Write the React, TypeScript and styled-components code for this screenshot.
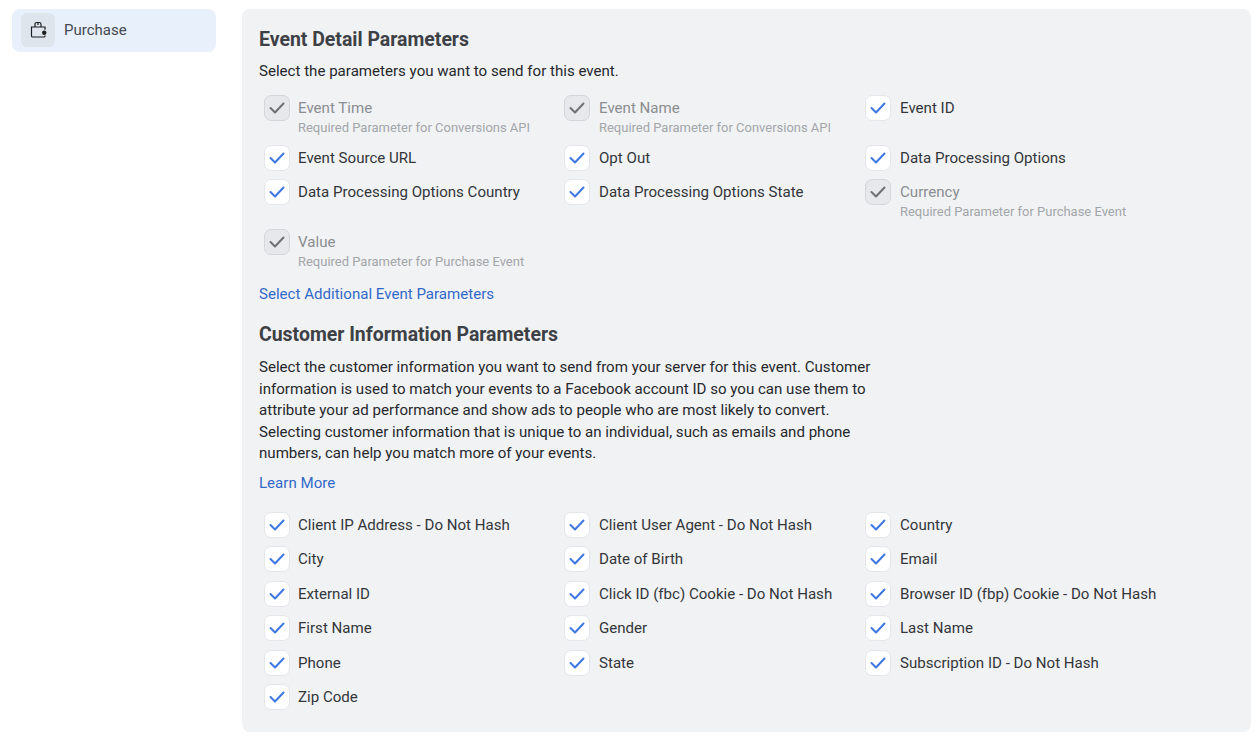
import React from "react";
import styled, { createGlobalStyle } from "styled-components";

const Global = createGlobalStyle`
  html, body { margin: 0; padding: 0; background: #fff; }
  body { font-family: Roboto, "Liberation Sans", sans-serif; color: #1c1e21; }
`;

const Page = styled.div`
  display: flex;
  align-items: flex-start;
  width: 1260px;
  height: 742px;
  box-sizing: border-box;
  padding: 9px 9px 10px 12px;
  gap: 26px;
  overflow: hidden;
`;

const SideItem = styled.div`
  display: flex;
  align-items: center;
  gap: 9px;
  width: 204px;
  height: 43px;
  box-sizing: border-box;
  padding: 0 0 1px 9px;
  background: #e8f0fb;
  border-radius: 8px;
  font-size: 15px;
  color: #444950;
`;

const IconBox = styled.div`
  display: flex;
  align-items: center;
  justify-content: center;
  width: 34px;
  height: 34px;
  background: #dfe5ec;
  border-radius: 6px;
  color: #1c1e21;
`;

const Panel = styled.div`
  width: 1009px;
  height: 723px;
  box-sizing: border-box;
  padding: 19px 17px 0;
  background: #f1f2f4;
  border-radius: 8px;
`;

const Heading = styled.h2<{ $top?: number }>`
  margin: ${(p) => p.$top ?? 0}px 0 0;
  font-size: 19.45px;
  line-height: 23px;
  font-weight: 700;
  color: #3d4146;
`;

const Copy = styled.p<{ $top: number }>`
  margin: ${(p) => p.$top}px 0 0;
  width: 625px;
  font-size: 15.08px;
  line-height: 21.6px;
  color: #26282c;
`;

const Options = styled.div<{ $top: number }>`
  display: grid;
  grid-template-columns: repeat(3, 301px);
  margin: ${(p) => p.$top}px 0 0 5px;
`;

const Option = styled.div<{ $h: number }>`
  display: flex;
  align-items: flex-start;
  height: ${(p) => p.$h}px;
  gap: 8px;

  &:not(:nth-child(3n + 1)) > :first-child {
    margin: 0 0.6px 0 -0.6px;
  }
`;

const Box = styled.div<{ $locked?: boolean }>`
  flex: none;
  display: flex;
  align-items: center;
  justify-content: center;
  width: 26px;
  height: 26px;
  box-sizing: border-box;
  border-radius: 7px;
  border: 1px solid ${(p) => (p.$locked ? "#d4d6da" : "#e4e6ea")};
  background: ${(p) => (p.$locked ? "#e7e8eb" : "#ffffff")};
  color: ${(p) => (p.$locked ? "#6e7074" : "#3f77e2")};
`;

const LabelCol = styled.div`
  display: flex;
  flex-direction: column;
`;

const Label = styled.span<{ $locked?: boolean }>`
  font-size: 15.08px;
  line-height: 26px;
  white-space: nowrap;
  color: ${(p) => (p.$locked ? "#8a8d91" : "#33363a")};
`;

const Sub = styled.span`
  font-size: 12.98px;
  line-height: 13px;
  white-space: nowrap;
  color: #a3a6aa;
`;

const Link = styled.a<{ $top: number }>`
  display: block;
  margin-top: ${(p) => p.$top}px;
  font-size: 15.08px;
  line-height: 20px;
  color: #3269c9;
`;

const Check = () => (
  <svg width="16" height="12" viewBox="0 0 16 12" fill="none">
    <path d="M1.5 6 L6 10.5 L14.5 1.5" stroke="currentColor" strokeWidth="2" strokeLinecap="round" strokeLinejoin="round" />
  </svg>
);

const Bag = () => (
  <svg width="18" height="18" viewBox="0 0 18 18" fill="none" stroke="currentColor" strokeWidth="1.2">
    <path d="M16 8.8 V6 H2.5 V15 A1 1 0 0 0 3.5 16 H15 A1 1 0 0 0 16 15 V14.6" />
    <path d="M6 6 V3.2 Q6 1.5 7.7 1.5 H10.3 Q12 1.5 12 3.2 V6" />
    <path d="M9 1.5 V4" />
    <circle cx="15.2" cy="11.7" r="2.2" fill="currentColor" stroke="none" />
  </svg>
);

type O = { l: string; s?: string };
const Item = ({ l, s, h }: O & { h: number }) => (
  <Option $h={h}>
    <Box $locked={!!s}><Check /></Box>
    <LabelCol>
      <Label $locked={!!s}>{l}</Label>
      {s && <Sub>{s}</Sub>}
    </LabelCol>
  </Option>
);

const CAPI = "Required Parameter for Conversions API";
const PE = "Required Parameter for Purchase Event";

const eventRows: { h: number; items: O[] }[] = [
  { h: 50, items: [{ l: "Event Time", s: CAPI }, { l: "Event Name", s: CAPI }, { l: "Event ID" }] },
  { h: 34.6, items: [{ l: "Event Source URL" }, { l: "Opt Out" }, { l: "Data Processing Options" }] },
  { h: 49.4, items: [{ l: "Data Processing Options Country" }, { l: "Data Processing Options State" }, { l: "Currency", s: PE }] },
  { h: 42, items: [{ l: "Value", s: PE }] },
];

const customer = [
  "Client IP Address - Do Not Hash", "Client User Agent - Do Not Hash", "Country",
  "City", "Date of Birth", "Email",
  "External ID", "Click ID (fbc) Cookie - Do Not Hash", "Browser ID (fbp) Cookie - Do Not Hash",
  "First Name", "Gender", "Last Name",
  "Phone", "State", "Subscription ID - Do Not Hash",
  "Zip Code",
];

export default function App() {
  return (
    <Page>
      <Global />
      <SideItem>
        <IconBox><Bag /></IconBox>
        Purchase
      </SideItem>
      <Panel>
        <Heading>Event Detail Parameters</Heading>
        <Copy $top={10}>Select the parameters you want to send for this event.</Copy>
        <Options $top={12}>
          {eventRows.flatMap((r) => r.items.map((o) => <Item key={o.l} {...o} h={r.h} />))}
        </Options>
        <Link $top={13.5}>Select Additional Event Parameters</Link>
        <Heading $top={19}>Customer Information Parameters</Heading>
        <Copy $top={11}>
          Select the customer information you want to send from your server for this event. Customer information is used to match your events to a Facebook account ID so you can use them to attribute your ad performance and show ads to people who are most likely to convert. Selecting customer information that is unique to an individual, such as emails and phone numbers, can help you match more of your events.
        </Copy>
        <Link $top={8}>Learn More</Link>
        <Options $top={18.8}>
          {customer.map((l) => <Item key={l} l={l} h={34.5} />)}
        </Options>
      </Panel>
    </Page>
  );
}
